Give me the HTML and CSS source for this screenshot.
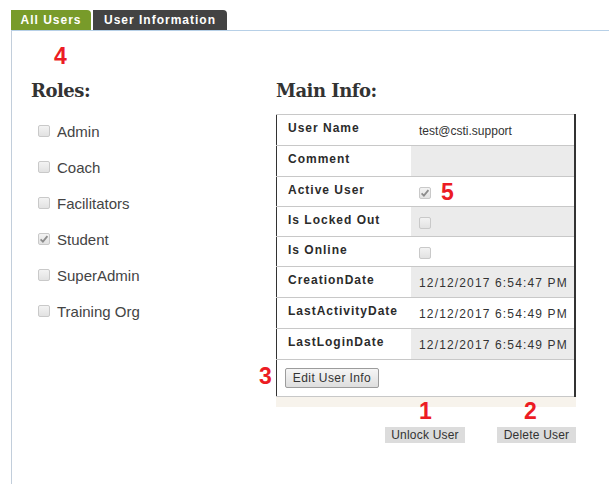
FILE: index.html
```html
<!DOCTYPE html>
<html>
<head>
<meta charset="utf-8">
<title>User Information</title>
<link rel="stylesheet" href="styles.css">
</head>
<body>
<div class="page">
  <div class="tabs">
    <div class="tab tab-green">All Users</div>
    <div class="tab tab-dark">User Information</div>
  </div>
  <div class="panel">
    <div class="roles">
      <h2 class="heading">Roles:</h2>
      <ul class="role-list">
        <li class="role"><span class="cb"></span><span>Admin</span></li>
        <li class="role"><span class="cb"></span><span>Coach</span></li>
        <li class="role"><span class="cb"></span><span>Facilitators</span></li>
        <li class="role"><span class="cb checked"><svg viewBox="0 0 12 12" width="12" height="12"><path d="M2.6 6.4 L4.9 8.6 L9.4 3.2" fill="none" stroke="#8c8c8c" stroke-width="1.8"/></svg></span><span>Student</span></li>
        <li class="role"><span class="cb"></span><span>SuperAdmin</span></li>
        <li class="role"><span class="cb"></span><span>Training Org</span></li>
      </ul>
    </div>
    <div class="main">
      <h2 class="heading">Main Info:</h2>
      <table class="info">
        <tr><th>User Name</th><td>test@csti.support</td></tr>
        <tr class="alt"><th>Comment</th><td></td></tr>
        <tr class="short"><th>Active User</th><td><span class="cb checked"><svg viewBox="0 0 12 12" width="12" height="12"><path d="M2.6 6.4 L4.9 8.6 L9.4 3.2" fill="none" stroke="#8c8c8c" stroke-width="1.8"/></svg></span></td></tr>
        <tr class="alt short"><th>Is Locked Out</th><td><span class="cb"></span></td></tr>
        <tr class="short"><th>Is Online</th><td><span class="cb"></span></td></tr>
        <tr class="alt"><th>CreationDate</th><td class="date">12/12/2017 6:54:47 PM</td></tr>
        <tr><th>LastActivityDate</th><td class="date">12/12/2017 6:54:49 PM</td></tr>
        <tr class="alt"><th>LastLoginDate</th><td class="date">12/12/2017 6:54:49 PM</td></tr>
        <tr class="btn-row"><td colspan="2"><button class="edit-btn">Edit User Info</button></td></tr>
      </table>
      <div class="strip"></div>
      <div class="actions">
        <button class="flat-btn unlock">Unlock User</button>
        <button class="flat-btn delete">Delete User</button>
      </div>
    </div>
  </div>
  <span class="mark mark-4">4</span>
  <span class="mark mark-5">5</span>
  <span class="mark mark-3">3</span>
  <span class="mark mark-1">1</span>
  <span class="mark mark-2">2</span>
</div>
</body>
</html>
```
FILE: styles.css
```css
html, body {
  margin: 0;
  padding: 0;
  background: #fff;
}
.page {
  position: relative;
  height: 484px;
  overflow: hidden;
  padding: 10px 0 0 11px;
  box-sizing: border-box;
  font-family: "Liberation Sans", Arial, sans-serif;
  color: #333;
}
.tabs {
  display: flex;
  gap: 2px;
  height: 20px;
}
.tab {
  display: flex;
  align-items: center;
  justify-content: center;
  height: 20px;
  border-top-right-radius: 4px;
  color: #fff;
  font-weight: bold;
  font-size: 12px;
  letter-spacing: 1px;
}
.tab-green {
  width: 80px;
  background: #789b2a;
}
.tab-dark {
  width: 134px;
  background: #434343;
}
.panel {
  display: flex;
  border-top: 1px solid #b7d0e7;
  border-left: 1px solid #c2cedb;
  height: 454px;
  box-sizing: border-box;
  padding-top: 48px;
}
.heading {
  margin: 0 0 11px 0;
  font-family: "DejaVu Serif", serif;
  font-weight: bold;
  font-size: 18px;
  letter-spacing: -0.5px;
  line-height: 24px;
  color: #333;
}
.roles {
  width: 245px;
  padding-left: 19px;
}
.role-list {
  list-style: none;
  margin: -1px 0 0 0;
  padding: 0 0 0 7px;
}
.role {
  display: flex;
  align-items: center;
  gap: 7px;
  height: 36px;
  font-size: 15px;
  color: #444;
}
.cb {
  display: inline-flex;
  width: 12px;
  height: 12px;
  box-sizing: border-box;
  border: 1px solid #c9c9c9;
  border-radius: 2px;
  background: linear-gradient(#f3f3f3, #e2e2e2);
  vertical-align: middle;
  position: relative;
}
.cb svg {
  position: absolute;
  left: -1px;
  top: -1px;
}
.main {
  width: 300px;
}
.info {
  width: 300px;
  border-collapse: collapse;
  border-top: 1px solid #c8c8c8;
  border-left: 1px solid #333;
  border-right: 2px solid #333;
}
.info tr {
  height: 31px;
  border-bottom: 1px solid #c8c8c8;
}
.info tr.short {
  height: 30px;
}
.info th {
  width: 123px;
  padding: 6px 0 0 11px;
  vertical-align: top;
  text-align: left;
  font-size: 12px;
  font-weight: bold;
  letter-spacing: 1px;
  color: #2b2b2b;
  line-height: 14px;
  background: #fff;
}
.info td {
  padding: 2px 0 0 8px;
  vertical-align: middle;
  font-size: 12px;
  line-height: 14px;
  color: #333;
}
.info td.date {
  letter-spacing: 1.15px;
}
.info tr.alt td {
  background: #ebebeb;
}
.info tr.btn-row {
  height: 37px;
}
.info tr.btn-row td {
  padding: 8px 0 8px 8px;
  background: #fff;
}
.edit-btn {
  display: block;
  width: 94px;
  height: 20px;
  padding: 0;
  border: 1px solid #9c9c9c;
  border-radius: 2px;
  background: linear-gradient(#f6f6f6, #dedede);
  font-family: "Liberation Sans", Arial, sans-serif;
  font-size: 12px;
  letter-spacing: 0.4px;
  color: #333;
}
.strip {
  height: 10px;
  background: #f7f3ec;
}
.actions {
  display: flex;
  justify-content: flex-end;
  gap: 32px;
  margin-top: 20px;
}
.flat-btn {
  height: 16px;
  padding: 0;
  border: none;
  background: #dcdcdc;
  font-family: "Liberation Sans", Arial, sans-serif;
  font-size: 12px;
  letter-spacing: 0.2px;
  color: #333;
  line-height: 16px;
}
.unlock {
  width: 80px;
}
.delete {
  width: 79px;
}
.mark {
  position: absolute;
  font-family: "Liberation Sans", Arial, sans-serif;
  font-weight: bold;
  font-size: 23px;
  line-height: 23px;
  color: #ec1c24;
}
.mark-4 { left: 54px; top: 45px; }
.mark-5 { left: 441px; top: 181px; }
.mark-3 { left: 259px; top: 365px; }
.mark-1 { left: 419px; top: 400px; }
.mark-2 { left: 524px; top: 400px; }
```
